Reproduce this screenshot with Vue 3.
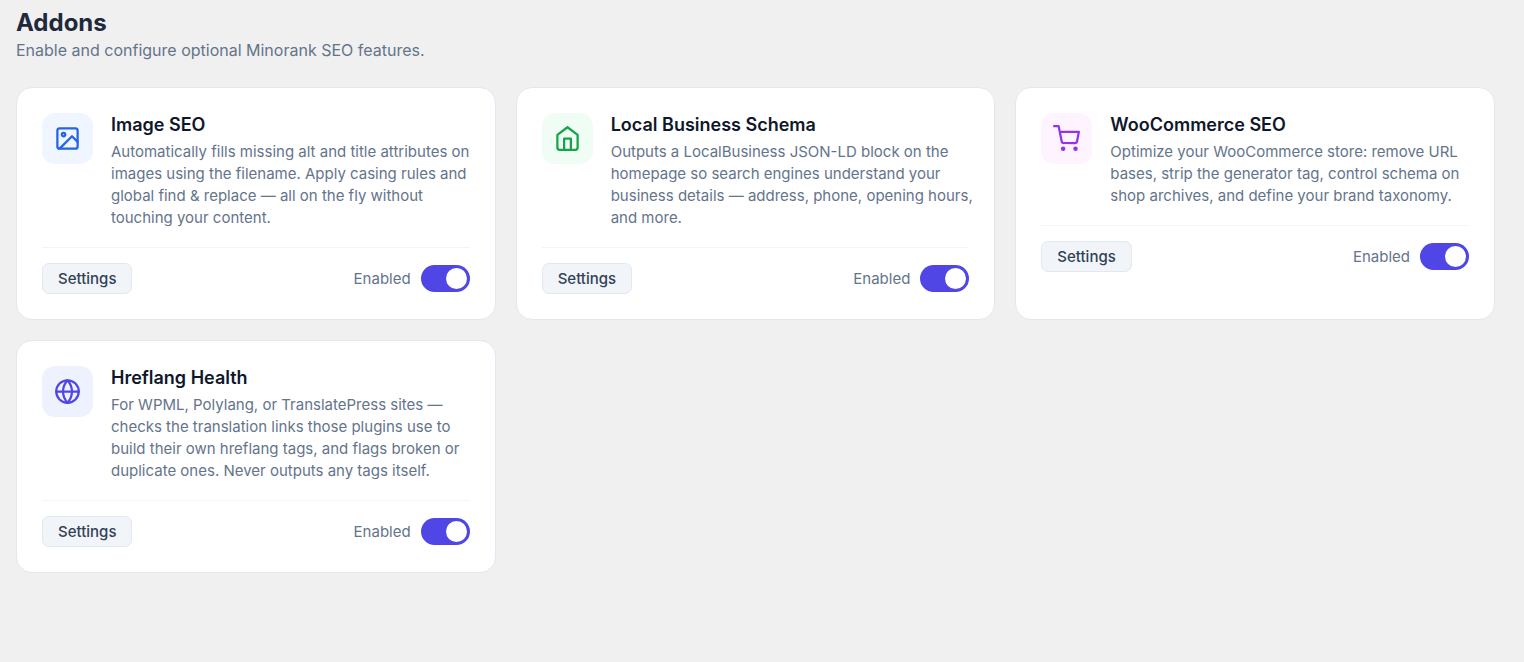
<script setup>
import { ref } from 'vue'

const addons = ref([
  {
    id: 'image',
    title: 'Image SEO',
    text: 'Automatically fills missing alt and title attributes on images using the filename. Apply casing rules and global find & replace — all on the fly without touching your content.',
    enabled: true,
  },
  {
    id: 'business',
    title: 'Local Business Schema',
    text: 'Outputs a LocalBusiness JSON-LD block on the homepage so search engines understand your business details — address, phone, opening hours, and more.',
    enabled: true,
  },
  {
    id: 'shop',
    title: 'WooCommerce SEO',
    text: 'Optimize your WooCommerce store: remove URL bases, strip the generator tag, control schema on shop archives, and define your brand taxonomy.',
    enabled: true,
  },
  {
    id: 'hreflang',
    title: 'Hreflang Health',
    text: 'For WPML, Polylang, or TranslatePress sites — checks the translation links those plugins use to build their own hreflang tags, and flags broken or duplicate ones. Never outputs any tags itself.',
    enabled: true,
  },
])
</script>

<template>
  <main class="page">
    <header class="head">
      <h1>Addons</h1>
      <p>Enable and configure optional Minorank SEO features.</p>
    </header>

    <section class="grid">
      <article v-for="addon in addons" :key="addon.id" class="card">
        <div class="body">
          <div class="icon" :class="addon.id">
            <svg viewBox="0 0 24 24" aria-hidden="true">
              <template v-if="addon.id === 'image'">
                <rect x="3" y="3" width="18" height="18" rx="2" />
                <circle cx="8.5" cy="8.5" r="1.5" />
                <path d="M21 15l-5-5L5 21" />
              </template>
              <template v-else-if="addon.id === 'business'">
                <path d="M3 8.7l9-6.7 9 6.7V20a2 2 0 0 1-2 2H5a2 2 0 0 1-2-2z" />
                <path d="M9 22V12h6v10" />
              </template>
              <template v-else-if="addon.id === 'shop'">
                <path d="M1 1h4l2.68 13.39a2 2 0 0 0 2 1.61h9.72a2 2 0 0 0 2-1.61L23 6H6" />
                <circle class="wheel" cx="9" cy="21" r="1" />
                <circle class="wheel" cx="20" cy="21" r="1" />
              </template>
              <template v-else>
                <circle cx="12" cy="12" r="10" />
                <path d="M2 12h20" />
                <path d="M12 2a15.3 15.3 0 0 1 4 10 15.3 15.3 0 0 1-4 10 15.3 15.3 0 0 1-4-10 15.3 15.3 0 0 1 4-10z" />
              </template>
            </svg>
          </div>
          <div class="copy">
            <h2>{{ addon.title }}</h2>
            <p>{{ addon.text }}</p>
          </div>
        </div>
        <footer class="foot">
          <button type="button">Settings</button>
          <label class="toggle" :for="'toggle-' + addon.id">
            <span>{{ addon.enabled ? 'Enabled' : 'Disabled' }}</span>
            <input :id="'toggle-' + addon.id" v-model="addon.enabled" type="checkbox" role="switch" />
          </label>
        </footer>
      </article>
    </section>
  </main>
</template>

<style>
body {
  margin: 0;
  background: #f0f0f0;
}
</style>

<style scoped>
.page {
  padding: 8px 29px 32px 16px;
  font-family: Inter, "Liberation Sans", sans-serif;
  color: #0f172a;
}

h1,
h2,
p {
  margin: 0;
}

.head {
  margin-bottom: 25px;
}

.head h1 {
  font-size: 24px;
  line-height: 30px;
  font-weight: 700;
  color: #1e293b;
}

.head p {
  font-size: 16px;
  line-height: 24px;
  color: #64748b;
}

.grid {
  display: grid;
  grid-template-columns: repeat(3, minmax(0, 1fr));
  gap: 20px;
}

.card {
  box-sizing: border-box;
  padding: 25px;
  border: 1px solid #e2e8f0;
  border-radius: 16px;
  background: #fff;
}

.body {
  display: flex;
  align-items: flex-start;
  gap: 18px;
}

.icon {
  display: flex;
  flex: none;
  align-items: center;
  justify-content: center;
  width: 51px;
  height: 51px;
  border-radius: 13px;
}

.icon svg {
  width: 27px;
  height: 27px;
  overflow: visible;
  fill: none;
  stroke: currentColor;
  stroke-width: 2;
  stroke-linecap: round;
  stroke-linejoin: round;
}

.icon .wheel {
  fill: currentColor;
}

.image {
  background: #eff6ff;
  color: #2563eb;
}

.business {
  background: #f0fdf4;
  color: #16a34a;
}

.shop {
  background: #fdf4ff;
  color: #9333ea;
}

.hreflang {
  background: #eef2ff;
  color: #4f46e5;
}

.copy {
  flex: 1;
  min-width: 0;
  margin-right: -10px;
}

.copy h2 {
  margin-bottom: 4px;
  font-size: 18px;
  line-height: 24px;
  font-weight: 600;
}

.copy p {
  font-size: 15px;
  line-height: 22px;
  color: #64748b;
}

.foot {
  display: flex;
  align-items: center;
  justify-content: space-between;
  margin-top: 18px;
  padding-top: 15px;
  border-top: 1px solid #f1f5f9;
}

.foot button {
  height: 31px;
  padding: 0 15px;
  border: 1px solid #e2e8f0;
  border-radius: 7px;
  background: #f1f5f9;
  color: #334155;
  font: 500 15px/20px Inter, "Liberation Sans", sans-serif;
}

.toggle {
  display: flex;
  align-items: center;
  gap: 10px;
  font-size: 15px;
  line-height: 20px;
  color: #64748b;
}

.toggle input {
  display: flex;
  align-items: center;
  box-sizing: border-box;
  width: 49px;
  height: 27px;
  margin: 0;
  padding: 0 3px;
  appearance: none;
  border-radius: 14px;
  background: #cbd5e1;
}

.toggle input::before {
  content: "";
  width: 21px;
  height: 21px;
  border-radius: 50%;
  background: #fff;
}

.toggle input:checked {
  justify-content: flex-end;
  background: #4f46e5;
}
</style>
